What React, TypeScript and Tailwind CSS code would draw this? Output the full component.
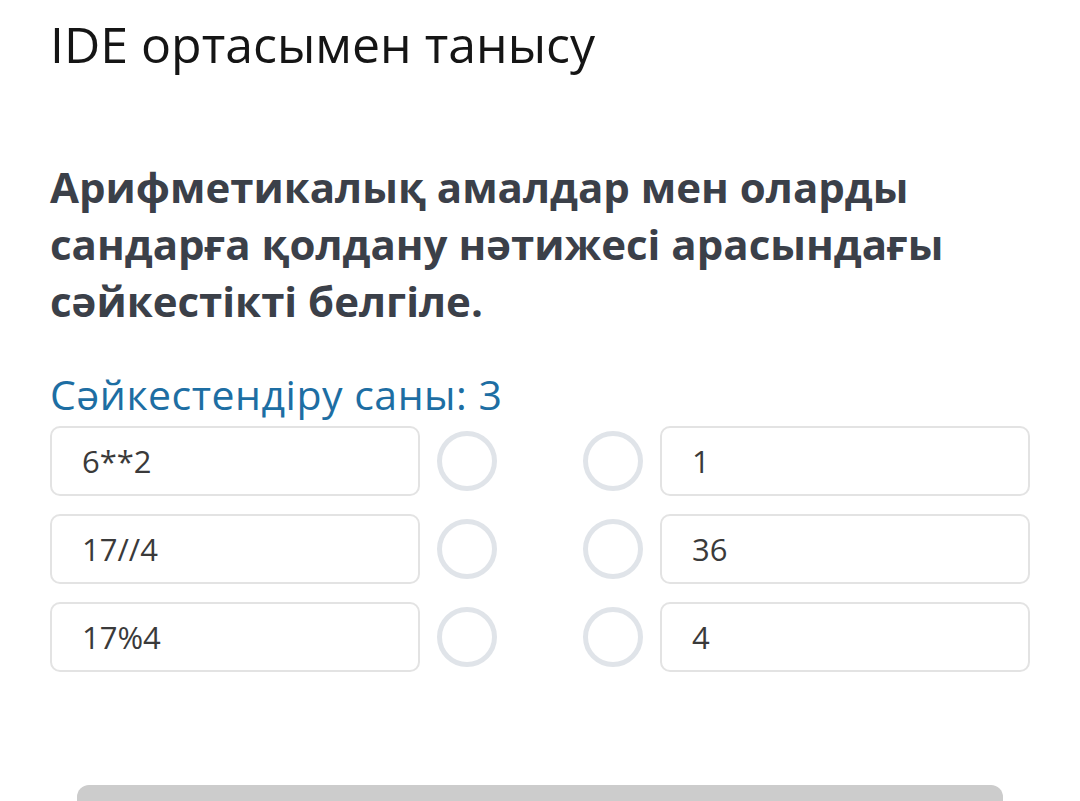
const rows = [
  { left: '6**2', right: '1' },
  { left: '17//4', right: '36' },
  { left: '17%4', right: '4' },
];

function Circle() {
  return (
    <div className="w-[60px] h-[60px] shrink-0 rounded-full border-[5px] border-[#e0e4e9] bg-white" />
  );
}

function Box({ text }: { text: string }) {
  return (
    <div className="w-[370px] h-[70px] shrink-0 rounded-[10px] border-2 border-[#e3e3e3] bg-white flex items-center pl-[30px] text-[31px] text-[#3a3a3a]">
      {text}
    </div>
  );
}

export default function App() {
  return (
    <div
      className="w-[1080px] h-[801px] overflow-hidden bg-white relative"
      style={{ fontFamily: '"Open Sans", "Noto Sans", sans-serif' }}
    >
      <div className="pl-[50px] pr-[50px]">
        {/* Title */}
        <h1 className="pt-[12px] text-[50px] leading-[64px] text-[#151515] font-normal">
          IDE ортасымен танысу
        </h1>

        {/* Question */}
        <p className="mt-[82px] text-[42px] leading-[57px] font-bold text-[#3b4049] w-[960px]">
          Арифметикалық амалдар мен оларды сандарға қолдану нәтижесі арасындағы сәйкестікті белгіле.
        </p>

        {/* Count */}
        <div className="mt-[42px] text-[41px] leading-[46px] tracking-[0.5px] text-[#1d6ea3]">
          Сәйкестендіру саны: 3
        </div>

        {/* Matching rows */}
        <div className="mt-[9px] flex flex-col gap-[18px]">
          {rows.map((r) => (
            <div key={r.left} className="flex items-center">
              <Box text={r.left} />
              <div className="ml-[17px]">
                <Circle />
              </div>
              <div className="flex-1" />
              <div className="mr-[17px]">
                <Circle />
              </div>
              <Box text={r.right} />
            </div>
          ))}
        </div>
      </div>

      {/* Bottom button */}
      <div className="absolute left-[77px] right-[77px] top-[785px] h-[40px] rounded-t-[12px] bg-[#cccccc]" />
    </div>
  );
}
